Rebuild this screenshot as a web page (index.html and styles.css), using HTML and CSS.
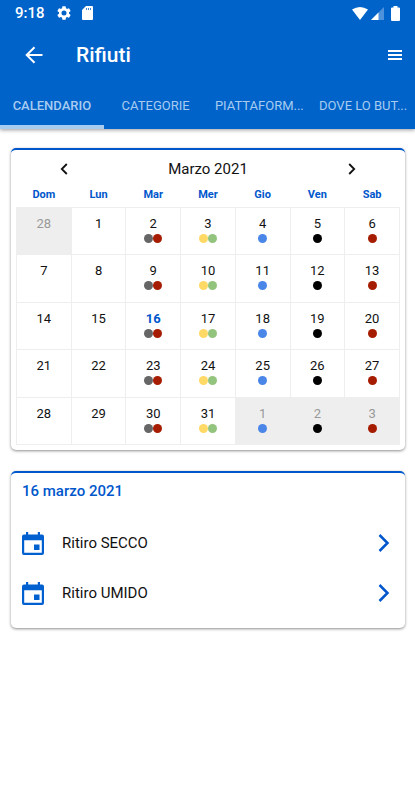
FILE: index.html
```html
<!DOCTYPE html>
<html lang="it">
<head>
<meta charset="utf-8">
<meta name="viewport" content="width=device-width, initial-scale=1">
<title>Rifiuti</title>
<link rel="stylesheet" href="styles.css">
</head>
<body>
<header class="app-header">
  <div class="status-bar">
    <span class="clock">9:18</span>
    <svg class="status-gear" viewBox="2 2 20 20" aria-hidden="true"><path fill="currentColor" d="M19.14 12.94c.04-.3.06-.61.06-.94 0-.32-.02-.64-.07-.94l2.03-1.58a.49.49 0 0 0 .12-.61l-1.92-3.32a.49.49 0 0 0-.59-.22l-2.39.96c-.5-.38-1.03-.7-1.62-.94l-.36-2.54a.48.48 0 0 0-.48-.41h-3.84c-.24 0-.43.17-.47.41l-.36 2.54c-.59.24-1.13.57-1.62.94l-2.39-.96a.48.48 0 0 0-.59.22L2.74 8.87c-.12.21-.08.47.12.61l2.03 1.58c-.05.3-.09.63-.09.94s.02.64.07.94l-2.03 1.58a.49.49 0 0 0-.12.61l1.92 3.32c.12.22.37.29.59.22l2.39-.96c.5.38 1.03.7 1.62.94l.36 2.54c.05.24.24.41.48.41h3.84c.24 0 .44-.17.47-.41l.36-2.54c.59-.24 1.13-.56 1.62-.94l2.39.96c.22.08.47 0 .59-.22l1.92-3.32a.49.49 0 0 0-.12-.61zM12 15.6a3.6 3.6 0 1 1 0-7.2 3.6 3.6 0 0 1 0 7.2z"/></svg>
    <svg class="status-card" viewBox="0 0 11 14" aria-hidden="true"><path fill="currentColor" d="M4 0h6a1 1 0 0 1 1 1v12a1 1 0 0 1-1 1H1a1 1 0 0 1-1-1V4z"/><path stroke="#0063ca" stroke-opacity=".75" d="M4.500 2v2M6.500 2v2M8.500 2v2"/></svg>
    <span class="status-right">
      <svg class="status-wifi" viewBox="0 0 16 13" aria-hidden="true"><path fill="currentColor" d="M0 2.500Q8-2.500 16 2.500L8 13z"/></svg>
      <svg class="status-signal" viewBox="0 0 13 13" aria-hidden="true"><path fill="currentColor" opacity=".3" d="M13 0v13H0z"/><path fill="currentColor" d="M7.500 5.500V13H0z"/></svg>
      <svg class="status-battery" viewBox="0 0 9 15" aria-hidden="true"><path fill="currentColor" d="M2.500 0h4v1.500H8a1 1 0 0 1 1 1V14a1 1 0 0 1-1 1H1a1 1 0 0 1-1-1V2.500a1 1 0 0 1 1-1h1.500z"/></svg>
    </span>
  </div>
  <div class="toolbar">
    <button class="icon-button" type="button" aria-label="Indietro"><svg class="icon-back" viewBox="0 0 18 18" aria-hidden="true"><path fill="none" stroke="currentColor" stroke-width="2" d="M17.500 9H2M9.500 1.200 1.700 9l7.800 7.800"/></svg></button>
    <h1>Rifiuti</h1>
    <button class="icon-button menu" type="button" aria-label="Menu"><svg class="icon-menu" viewBox="0 0 14 10" aria-hidden="true"><path stroke="currentColor" stroke-width="1.800" d="M0 1h14M0 5h14M0 9h14"/></svg></button>
  </div>
  <nav class="tabs">
    <a class="tab active" href="#calendario" aria-current="page">CALENDARIO</a>
    <a class="tab" href="#categorie">CATEGORIE</a>
    <a class="tab" href="#piattaforma">PIATTAFORM...</a>
    <a class="tab" href="#dove">DOVE LO BUT...</a>
  </nav>
</header>
<main>
  <section class="card calendar" id="calendario">
    <div class="month-bar">
      <button class="month-button" type="button" aria-label="Mese precedente"><svg class="icon-month" viewBox="0 0 8 12" aria-hidden="true"><path fill="none" stroke="currentColor" stroke-width="1.800" d="M6.800 1 1.800 6l5 5"/></svg></button>
      <h2>Marzo 2021</h2>
      <button class="month-button" type="button" aria-label="Mese successivo"><svg class="icon-month" viewBox="0 0 8 12" aria-hidden="true"><path fill="none" stroke="currentColor" stroke-width="1.800" d="m1.200 1 5 5-5 5"/></svg></button>
    </div>
    <table>
      <thead><tr><th>Dom</th><th>Lun</th><th>Mar</th><th>Mer</th><th>Gio</th><th>Ven</th><th>Sab</th></tr></thead>
      <tbody>
        <tr>
          <td class="outside">28</td><td>1</td>
          <td>2<div class="dots"><i class="dot dry"></i><i class="dot wet"></i></div></td>
          <td>3<div class="dots"><i class="dot plastic"></i><i class="dot glass"></i></div></td>
          <td>4<div class="dots"><i class="dot paper"></i></div></td>
          <td>5<div class="dots"><i class="dot other"></i></div></td>
          <td>6<div class="dots"><i class="dot wet"></i></div></td>
        </tr>
        <tr>
          <td>7</td><td>8</td>
          <td>9<div class="dots"><i class="dot dry"></i><i class="dot wet"></i></div></td>
          <td>10<div class="dots"><i class="dot plastic"></i><i class="dot glass"></i></div></td>
          <td>11<div class="dots"><i class="dot paper"></i></div></td>
          <td>12<div class="dots"><i class="dot other"></i></div></td>
          <td>13<div class="dots"><i class="dot wet"></i></div></td>
        </tr>
        <tr>
          <td>14</td><td>15</td>
          <td><b class="today">16</b><div class="dots"><i class="dot dry"></i><i class="dot wet"></i></div></td>
          <td>17<div class="dots"><i class="dot plastic"></i><i class="dot glass"></i></div></td>
          <td>18<div class="dots"><i class="dot paper"></i></div></td>
          <td>19<div class="dots"><i class="dot other"></i></div></td>
          <td>20<div class="dots"><i class="dot wet"></i></div></td>
        </tr>
        <tr>
          <td>21</td><td>22</td>
          <td>23<div class="dots"><i class="dot dry"></i><i class="dot wet"></i></div></td>
          <td>24<div class="dots"><i class="dot plastic"></i><i class="dot glass"></i></div></td>
          <td>25<div class="dots"><i class="dot paper"></i></div></td>
          <td>26<div class="dots"><i class="dot other"></i></div></td>
          <td>27<div class="dots"><i class="dot wet"></i></div></td>
        </tr>
        <tr>
          <td>28</td><td>29</td>
          <td>30<div class="dots"><i class="dot dry"></i><i class="dot wet"></i></div></td>
          <td>31<div class="dots"><i class="dot plastic"></i><i class="dot glass"></i></div></td>
          <td class="outside">1<div class="dots"><i class="dot paper"></i></div></td>
          <td class="outside">2<div class="dots"><i class="dot other"></i></div></td>
          <td class="outside">3<div class="dots"><i class="dot wet"></i></div></td>
        </tr>
      </tbody>
    </table>
  </section>
  <section class="card events">
    <h2>16 marzo 2021</h2>
    <a class="event" href="#secco">
      <svg class="icon-event" viewBox="0 0 22 23" aria-hidden="true"><path fill="currentColor" fill-rule="evenodd" d="M4 0h2.200v2.500h9.600V0H18v2.500h2a2 2 0 0 1 2 2V21a2 2 0 0 1-2 2H2a2 2 0 0 1-2-2V4.500a2 2 0 0 1 2-2h2zM2.200 8.200v12.600h17.600V8.200zM12 12.500h5.500V18H12z"/></svg>
      <span>Ritiro SECCO</span>
      <svg class="icon-next" viewBox="0 0 12 18" aria-hidden="true"><path fill="none" stroke="currentColor" stroke-width="2.500" d="m1.500 1 8 8-8 8"/></svg>
    </a>
    <a class="event" href="#umido">
      <svg class="icon-event" viewBox="0 0 22 23" aria-hidden="true"><path fill="currentColor" fill-rule="evenodd" d="M4 0h2.200v2.500h9.600V0H18v2.500h2a2 2 0 0 1 2 2V21a2 2 0 0 1-2 2H2a2 2 0 0 1-2-2V4.500a2 2 0 0 1 2-2h2zM2.200 8.200v12.600h17.600V8.200zM12 12.500h5.500V18H12z"/></svg>
      <span>Ritiro UMIDO</span>
      <svg class="icon-next" viewBox="0 0 12 18" aria-hidden="true"><path fill="none" stroke="currentColor" stroke-width="2.500" d="m1.500 1 8 8-8 8"/></svg>
    </a>
  </section>
</main>
</body>
</html>
```
FILE: styles.css
```css
* { box-sizing: border-box; }
body {
  margin: 0;
  background: #fff;
  color: #111;
  font-family: Roboto, sans-serif;
}
h1, h2 { margin: 0; }
svg { display: block; flex: none; }
button {
  padding: 0;
  border: 0;
  background: none;
  color: inherit;
  font: inherit;
}
a { color: inherit; text-decoration: none; }

.app-header {
  background: #0063ca;
  color: #fff;
  box-shadow: 0 1px 4px rgba(0, 0, 0, .4);
}
.status-bar {
  display: flex;
  align-items: center;
  height: 26px;
  padding: 0 15px;
}
.clock {
  width: 42px;
  font-size: 15px;
  font-weight: 500;
}
.status-gear { width: 14px; height: 14px; }
.status-card { width: 11px; height: 14px; margin-left: 11px; }
.status-right {
  display: flex;
  align-items: center;
  margin-left: auto;
}
.status-wifi { width: 16px; height: 13px; }
.status-signal { width: 13px; height: 13px; margin: 0 7px 0 3px; }
.status-battery { width: 9px; height: 15px; }

.toolbar {
  display: flex;
  align-items: center;
  height: 57px;
  padding: 0 13px 0 25px;
}
.icon-button { padding: 8px 0; }
.icon-back { width: 18px; height: 18px; }
.icon-menu { width: 14px; height: 10px; }
.menu { margin-left: auto; }
.toolbar h1 {
  margin-left: 33px;
  font-size: 21px;
  font-weight: 500;
  line-height: 28px;
}
.tabs {
  display: grid;
  grid-template-columns: repeat(4, 1fr);
}
.tab {
  height: 46px;
  border-bottom: 4px solid transparent;
  color: #a8cbf0;
  font-size: 13px;
  font-weight: 400;
  line-height: 46px;
  text-align: center;
  white-space: nowrap;
}
.tab.active { border-color: #a8cbf0; font-weight: 500; }

main {
  display: grid;
  gap: 21px;
  padding: 19px 10px 19px 11px;
}
.card {
  border-top: 2px solid #0057cc;
  border-radius: 5px;
  background: #fff;
  box-shadow: 0 1px 3px rgba(0, 0, 0, .45);
}
.calendar { padding: 0 5px 5px; }
.month-bar {
  display: flex;
  align-items: center;
  justify-content: space-between;
  height: 37px;
  padding: 0 44px;
}
.month-bar h2 { font-size: 15px; font-weight: 400; }
.month-button { padding: 6px 0; }
.icon-month { width: 8px; height: 12px; }

table {
  width: 100%;
  height: 258px;
  border-collapse: collapse;
  table-layout: fixed;
}
th {
  height: 20px;
  padding: 0 0 4px;
  color: #0057cc;
  font-size: 11px;
  font-weight: 700;
  line-height: 16px;
}
td {
  height: 47px;
  padding: 8px 0 0;
  border: 1px solid #eee;
  font-size: 13px;
  line-height: 16px;
  text-align: center;
  vertical-align: top;
}
.outside { background: #eee; color: #999; }
.today { color: #0057cc; }
.dots { display: flex; justify-content: center; padding-top: 2px; }
.dot { width: 9px; height: 9px; border-radius: 50%; }
.dry { background: #666; }
.wet { background: #a61c00; }
.plastic { background: #ffd966; }
.glass { background: #93c47d; }
.paper { background: #4a86e8; }
.other { background: #000; }

.events { padding: 8px 15px 10px 11px; }
.events h2 {
  margin-bottom: 17px;
  color: #0057cc;
  font-size: 15px;
  font-weight: 500;
  line-height: 20px;
}
.event {
  display: flex;
  align-items: center;
  height: 50px;
  font-size: 15px;
}
.event span { flex: 1; margin-left: 18px; }
.icon-event { width: 22px; height: 23px; color: #0060d0; }
.icon-next { width: 12px; height: 18px; color: #0057cc; }
```
